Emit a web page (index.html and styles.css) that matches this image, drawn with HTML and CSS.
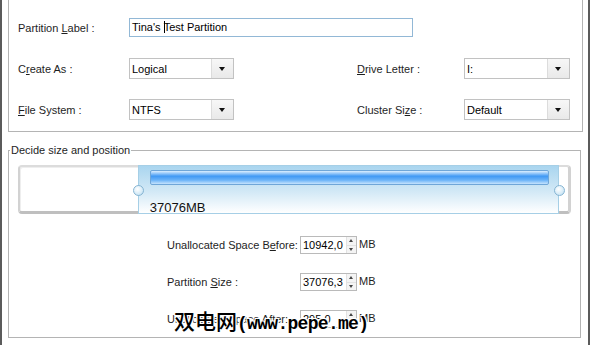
FILE: index.html
```html
<!DOCTYPE html>
<html lang="en">
<head>
    <meta charset="UTF-8">
    <title>Create Partition</title>
    <link rel="stylesheet" href="styles.css">
</head>
<body>
<div class="window">

    <div class="frame">
        <div class="row">
            <span class="lbl">Partition <u>L</u>abel :</span>
            <div class="textbox">Tina's <span class="caret"></span>Test Partition</div>
        </div>
        <div class="row">
            <span class="lbl">C<u>r</u>eate As :</span>
            <div class="combo"><span class="val">Logical</span><span class="drop"></span></div>
            <span class="lbl lbl-right"><u>D</u>rive Letter :</span>
            <div class="combo combo-wide"><span class="val">I:</span><span class="drop"></span></div>
        </div>
        <div class="row">
            <span class="lbl"><u>F</u>ile System :</span>
            <div class="combo"><span class="val">NTFS</span><span class="drop"></span></div>
            <span class="lbl lbl-right">Cluster Si<u>z</u>e :</span>
            <div class="combo combo-wide"><span class="val">Default</span><span class="drop"></span></div>
        </div>
    </div>

    <fieldset class="group">
        <legend>Decide size and position</legend>
        <div class="group-body">
            <div class="track">
                <div class="seg seg-free"></div>
                <div class="seg seg-part">
                    <div class="bar"></div>
                    <div class="size">37076MB</div>
                    <span class="handle handle-l"></span>
                    <span class="handle handle-r"></span>
                </div>
                <div class="seg seg-end"></div>
            </div>

            <div class="spin-row">
                <span class="spin-lbl">Unallocated Space B<u>e</u>fore:</span>
                <div class="spin"><span class="spin-val">10942,0</span><span class="spin-btns"><i class="up"></i><i class="down"></i></span></div>
                <span class="unit">MB</span>
            </div>
            <div class="spin-row">
                <span class="spin-lbl">Partition <u>S</u>ize :</span>
                <div class="spin"><span class="spin-val">37076,3</span><span class="spin-btns"><i class="up"></i><i class="down"></i></span></div>
                <span class="unit">MB</span>
            </div>
            <div class="spin-row">
                <span class="spin-lbl">Unallocated Space After:</span>
                <div class="spin"><span class="spin-val">295,0</span><span class="spin-btns"><i class="up"></i><i class="down"></i></span></div>
                <span class="unit">MB</span>
            </div>
        </div>
    </fieldset>

    <div class="watermark"><span class="wm-cjk">双电网</span><span class="wm-latin">(www.pepe.me)</span></div>
</div>
</body>
</html>
```

FILE: styles.css
```css
body {
    margin: 0;
    background: #fff;
    font-family: "Liberation Sans", Arial, sans-serif;
    font-size: 11px;
    color: #1e1e1e;
}
u {
    text-decoration: underline;
    text-underline-offset: 1px;
}
.window {
    position: relative;
    width: 590px;
    height: 345px;
    box-sizing: border-box;
    border-left: 2px solid #5b5b5b;
    border-right: 2px solid #5b5b5b;
    overflow: hidden;
}

/* top properties frame */
.frame {
    margin-left: 6px;
    width: 575px;
    height: 132px;
    box-sizing: border-box;
    border: 1px solid #b4b4b4;
    border-top: none;
    padding: 17px 0 0 9px;
}
.row {
    display: flex;
    align-items: center;
    height: 21px;
}
.row + .row {
    margin-top: 20px;
}
.lbl {
    width: 111px;
    flex: none;
}
.lbl-right {
    margin-left: 123px;
    width: 107px;
}
.textbox {
    width: 284px;
    height: 19px;
    box-sizing: border-box;
    border: 1px solid #92b8d6;
    padding-left: 2px;
    line-height: 17px;
    color: #000;
}
.caret {
    display: inline-block;
    width: 1px;
    height: 12px;
    margin-right: -1px;
    background: #000;
    vertical-align: -2px;
}
.combo {
    display: flex;
    width: 105px;
    height: 21px;
    box-sizing: border-box;
    border: 1px solid #c2c2c2;
    flex: none;
}
.combo-wide {
    width: 106px;
}
.combo .val {
    flex: 1;
    padding-left: 2px;
    line-height: 20px;
    color: #000;
}
.drop {
    position: relative;
    width: 21px;
    border-left: 1px solid #dcdcdc;
    background: linear-gradient(#f7f7f7, #e9e9e9);
}
.drop::after {
    content: "";
    position: absolute;
    left: 7px;
    top: 8px;
    border-left: 3.5px solid transparent;
    border-right: 3.5px solid transparent;
    border-top: 4px solid #111;
}

/* size and position group */
.group {
    margin: 11px 0 0 6px;
    width: 573px;
    box-sizing: border-box;
    border: 1px solid #b4b4b4;
    padding: 0;
    min-inline-size: 0;
}
.group legend {
    margin-left: 1px;
    padding: 0 1px;
    line-height: 14px;
}
.group-body {
    padding: 0 9px 9px;
}
.track {
    display: flex;
    height: 49px;
    margin-top: 8px;
}
.seg {
    box-sizing: border-box;
}
.seg-free {
    width: 120px;
    border: 2px solid #d2d2d2;
    border-top-color: #dcdcdc;
    border-bottom: 3px solid #bfbfbf;
    border-right: none;
    border-radius: 4px 0 0 4px;
    background: #fff;
    box-shadow: inset 1px 1px 0 #eeeeee;
}
.seg-end {
    width: 12px;
    border: 2px solid #d2d2d2;
    border-top-color: #dcdcdc;
    border-bottom: 3px solid #bfbfbf;
    border-right-width: 3px;
    border-left: none;
    border-radius: 0 4px 4px 0;
    background: #fff;
}
.seg-part {
    position: relative;
    width: 422px;
    border: 1px solid #a6cfe6;
    background: linear-gradient(#a9d5ef, #d3e9f6 55%, #ffffff);
    padding: 4px 9px 0 11px;
}
.bar {
    height: 15px;
    box-sizing: border-box;
    border: 1px solid #6fa6d8;
    border-radius: 2px;
    background: linear-gradient(#dcefff, #4199f4 40%, #6bb3f8 70%, #c5e3fd);
}
.size {
    margin-top: 16px;
    font-size: 13px;
    line-height: 14px;
    color: #111;
}
.handle {
    position: absolute;
    top: 19px;
    width: 11px;
    height: 11px;
    box-sizing: border-box;
    border: 1px solid #86b5d3;
    border-radius: 50%;
    background: radial-gradient(circle at 40% 35%, #ffffff, #d6ebf7 60%, #b4d7ec);
}
.handle-l {
    left: -6px;
}
.handle-r {
    right: -7px;
}

.spin-row {
    display: flex;
    align-items: center;
    height: 18px;
    margin: 19px 0 0 149px;
}
.track + .spin-row {
    margin-top: 22px;
}
.spin-lbl {
    width: 133px;
}
.spin {
    display: flex;
    width: 57px;
    height: 18px;
    box-sizing: border-box;
    border: 1px solid #bababa;
}
.spin-val {
    flex: 1;
    padding-left: 2px;
    line-height: 16px;
    color: #000;
}
.spin-btns {
    display: flex;
    flex-direction: column;
    width: 9px;
    border-left: 1px solid #e2e2e2;
    background: #f4f4f4;
}
.spin-btns i {
    position: relative;
    flex: 1;
}
.spin-btns i + i {
    border-top: 1px solid #e2e2e2;
}
.spin-btns i::after {
    content: "";
    position: absolute;
    left: 2px;
    top: 2px;
    border-left: 2.5px solid transparent;
    border-right: 2.5px solid transparent;
}
.spin-btns .up::after {
    border-bottom: 3px solid #444;
}
.spin-btns .down::after {
    border-top: 3px solid #444;
}
.unit {
    margin-left: 2px;
    margin-top: -3px;
}

.watermark {
    position: absolute;
    left: 172px;
    top: 306px;
    line-height: 28px;
    color: #000;
    white-space: nowrap;
    text-shadow: 0 0 2px #fff, 1px 1px 0 #fff, -1px -1px 0 #fff, 1px -1px 0 #fff, -1px 1px 0 #fff;
}
.wm-cjk {
    font-family: "Noto Sans CJK SC", sans-serif;
    font-size: 21px;
    font-weight: 500;
}
.wm-latin {
    font-family: "Liberation Mono", monospace;
    font-size: 18px;
    font-weight: bold;
    letter-spacing: -0.7px;
}
```
